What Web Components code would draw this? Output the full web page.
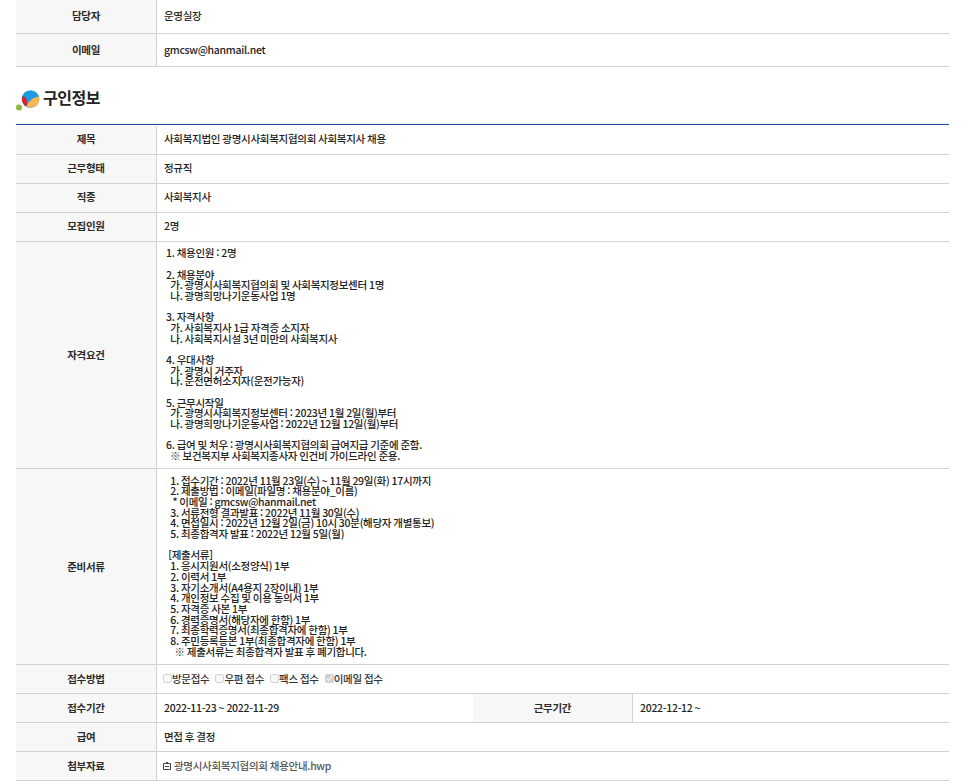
<!DOCTYPE html>
<html lang="ko">
<head>
<meta charset="utf-8">
<title>구인정보</title>
<style>
  html, body { margin: 0; background: #fff; }
  body {
    font-family: "Noto Sans CJK KR", "Noto Sans", sans-serif;
    font-size: 10.5px;
    color: #333;
    letter-spacing: -0.29px;
    word-spacing: -0.55px;
  }
  main { display: block; padding: 0 26px 0 16px; }
</style>
</head>
<body>
<main>
  <info-table>
    <info-row data-label="담당자" style="--row-height: 33px">운영실장</info-row>
    <info-row data-label="이메일" style="--row-height: 32px">gmcsw@hanmail.net</info-row>
  </info-table>

  <section-title>구인정보</section-title>

  <info-table data-accent>
    <info-row data-label="제목" style="--cell-shift: 4px">사회복지법인 광명시사회복지협의회 사회복지사 채용</info-row>
    <info-row data-label="근무형태" style="--cell-shift: 4px">정규직</info-row>
    <info-row data-label="직종" style="--cell-shift: 4px">사회복지사</info-row>
    <info-row data-label="모집인원" style="--cell-shift: 4px">2명</info-row>
    <info-row data-label="자격요건" style="--row-height: 226px"><pre-text> 1. 채용인원 : 2명

 2. 채용분야
   가. 광명시사회복지협의회 및 사회복지정보센터 1명
   나. 광명희망나기운동사업 1명

 3. 자격사항
   가. 사회복지사 1급 자격증 소지자
   나. 사회복지시설 3년 미만의 사회복지사

 4. 우대사항
   가. 광명시 거주자
   나. 운전면허소지자(운전가능자)

 5. 근무시작일
   가. 광명시사회복지정보센터 : 2023년 1월 2일(월)부터
   나. 광명희망나기운동사업 : 2022년 12월 12일(월)부터

 6. 급여 및 처우 : 광명시사회복지협의회 급여지급 기준에 준함.
   ※ 보건복지부 사회복지종사자 인건비 가이드라인 준용.</pre-text></info-row>
    <info-row data-label="준비서류" style="--row-height: 195px; --cell-shift: 0px; --pre-shift: 0px"><pre-text>   1. 접수기간 : 2022년 11월 23일(수) ~ 11월 29일(화) 17시까지
   2. 제출방법 : 이메일(파일명 : 채용분야_이름)
    * 이메일 : gmcsw@hanmail.net
   3. 서류전형 결과발표 : 2022년 11월 30일(수)
   4. 면접일시 : 2022년 12월 2일(금) 10시 30분(해당자 개별통보)
   5. 최종합격자 발표 : 2022년 12월 5일(월)

  [제출서류]
   1. 응시지원서(소정양식) 1부
   2. 이력서 1부
   3. 자기소개서(A4용지 2장이내) 1부
   4. 개인정보 수집 및 이용 동의서 1부
   5. 자격증 사본 1부
   6. 경력증명서(해당자에 한함) 1부
   7. 최종학력증명서(최종합격자에 한함) 1부
   8. 주민등록등본 1부(최종합격자에 한함) 1부
     ※ 제출서류는 최종합격자 발표 후 폐기합니다.</pre-text></info-row>
    <info-row data-label="접수방법">
      <apply-option>방문접수</apply-option>
      <apply-option>우편 접수</apply-option>
      <apply-option>팩스 접수</apply-option>
      <apply-option data-checked>이메일 접수</apply-option>
    </info-row>
    <info-row data-label="접수기간" data-label2="근무기간" data-value2="2022-12-12 ~">2022-11-23 ~ 2022-11-29</info-row>
    <info-row data-label="급여">면접 후 결정</info-row>
    <info-row data-label="첨부자료"><file-link>광명시사회복지협의회 채용안내.hwp</file-link></info-row>
  </info-table>
</main>

<script>
class InfoTable extends HTMLElement
{
  constructor()
  {
    super();
    this.attachShadow({mode: "open"});
    this.shadowRoot.innerHTML = `
      <style>
        :host { display: block; }
        :host([data-accent]) { border-top: 1px solid #1d4e9e; padding-top: 1px; }
      </style>
      <slot></slot>
    `;
  }
}

class InfoRow extends HTMLElement
{
  constructor()
  {
    super();
    this.attachShadow({mode: "open"});
    this.render();
  }

  render()
  {
    const label = this.getAttribute("data-label") ?? "";
    const label2 = this.getAttribute("data-label2");
    const value2 = this.getAttribute("data-value2");

    this.shadowRoot.innerHTML = `
      <style>
        ${this.styleCSS()}
      </style>
      <div class="cell label">${label}</div>
      <div class="cell value"><slot></slot></div>
      ${label2 ? `<div class="cell label">${label2}</div><div class="cell value">${value2}</div>` : ""}
    `;
    if (label2) this.style.gridTemplateColumns = "141px 316px 160px 1fr";
  }

  styleCSS()
  {
    return `
      :host {
        display: grid;
        grid-template-columns: 141px 1fr;
        min-height: var(--row-height, 28px);
        border-bottom: 1px solid #d2d2d2;
      }
      .cell {
        display: flex;
        align-items: center;
        min-width: 0;
        padding-bottom: var(--cell-shift, 2px);
        box-sizing: border-box;
      }
      .label {
        justify-content: center;
        background: #f7f7f7;
        border-right: 1px solid #d2d2d2;
        font-weight: 700;
        color: #2b2b2b;
      }
      .value { padding-left: 7px; padding-right: 7px; color: #222; font-weight: 500; }
    `;
  }
}

class PreText extends HTMLElement
{
  constructor()
  {
    super();
    this.attachShadow({mode: "open"});
    this.shadowRoot.innerHTML = `
      <style>
        :host { display: block; margin-top: var(--pre-shift, 2px); }
        div { white-space: pre; line-height: 10.67px; }
      </style>
      <div><slot></slot></div>
    `;
  }
}

class SectionTitle extends HTMLElement
{
  constructor()
  {
    super();
    this.attachShadow({mode: "open"});
    this.shadowRoot.innerHTML = `
      <style>
        :host {
          display: flex;
          align-items: center;
          gap: 3px;
          height: 57px;
          padding-top: 2px;
          box-sizing: border-box;
          font-size: 16px;
          font-weight: 700;
          color: #222;
          letter-spacing: -0.5px;
          word-spacing: 0;
        }
        svg { flex: none; margin-top: 7px; }
      </style>
      <svg width="24" height="22" viewBox="0 0 24 22">
        <circle cx="3" cy="18.5" r="3" fill="#8db63c"/>
        <circle cx="14.5" cy="10" r="8.8" fill="#1d9be0"/>
        <path d="M22.9 7.5A8.8 8.8 0 0 1 10.5 17.8C12 12.5 16.5 8.5 22.9 7.5Z" fill="#f7b555"/>
        <path d="M6.5 7.5C7.8 6.8 10 8.2 10.8 11.2C11.3 13.4 11 15.5 10.3 17.6A8.8 8.8 0 0 1 6.5 7.5Z" fill="#d9232e"/>
      </svg>
      <slot></slot>
    `;
  }
}

class ApplyOption extends HTMLElement
{
  constructor()
  {
    super();
    this.attachShadow({mode: "open"});
    const checked = this.hasAttribute("data-checked") ? "checked" : "";
    this.shadowRoot.innerHTML = `
      <style>
        :host {
          display: inline-flex;
          align-items: center;
          margin: 0 7px 0 -1px;
          color: #333;
        }
        input { width: 9px; height: 9px; margin: 0; }
      </style>
      <input type="checkbox" disabled ${checked}><slot></slot>
    `;
  }
}

class FileLink extends HTMLElement
{
  constructor()
  {
    super();
    this.attachShadow({mode: "open"});
    this.shadowRoot.innerHTML = `
      <style>
        :host {
          display: inline-flex;
          align-items: center;
          gap: 3px;
          color: #555;
        }
        svg { flex: none; margin: 1px 0 0 -1px; }
      </style>
      <svg width="8" height="8" viewBox="0 0 8 8" fill="none" stroke="#444" stroke-width="1">
        <path d="M.5 1.5h7v6h-7zM3 .5h2M2 4.5h4"/>
      </svg>
      <slot></slot>
    `;
  }
}

customElements.define("info-table", InfoTable);
customElements.define("info-row", InfoRow);
customElements.define("pre-text", PreText);
customElements.define("section-title", SectionTitle);
customElements.define("apply-option", ApplyOption);
customElements.define("file-link", FileLink);
</script>
</body>
</html>
